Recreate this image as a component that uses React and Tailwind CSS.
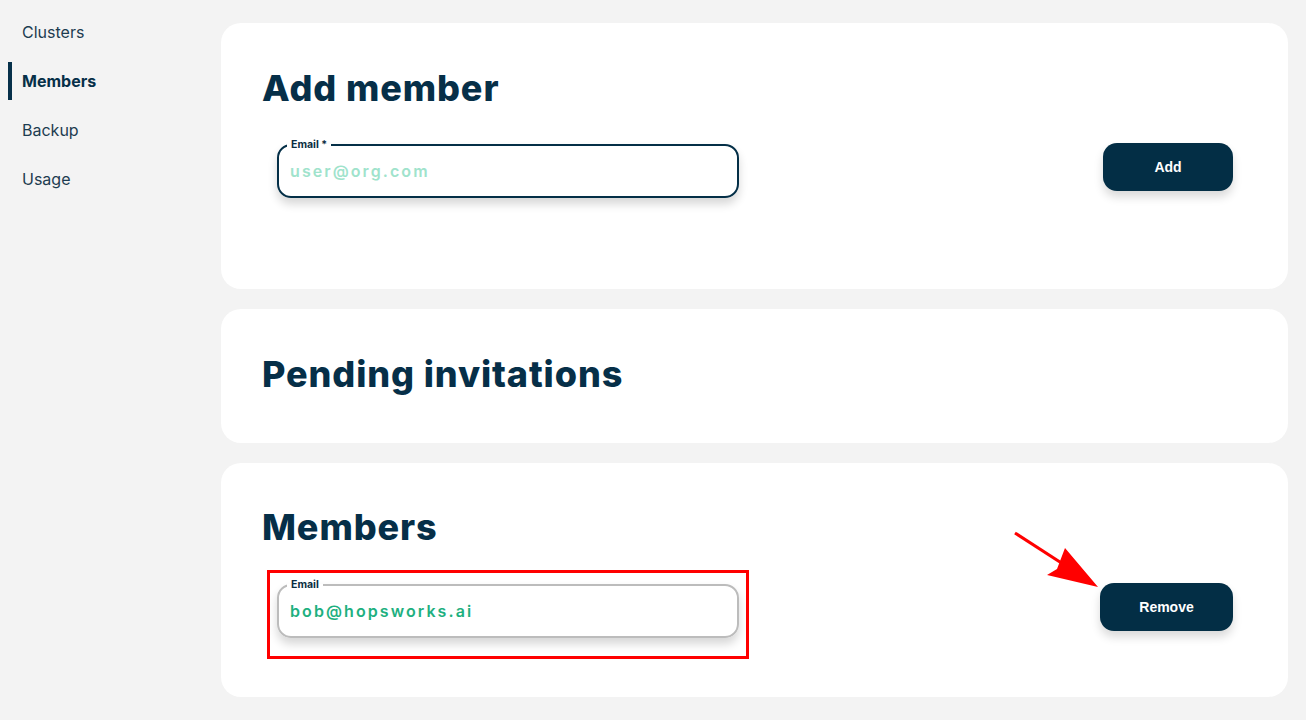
const NAV = ["Clusters", "Members", "Backup", "Usage"];

function EmailField({ label, value, placeholder, active }) {
  return (
    <fieldset
      className={`w-[462px] h-[58px] -mt-[4px] rounded-[14px] border-2 bg-white px-[11px] shadow-[0_6px_10px_rgba(0,0,0,0.16)] ${
        active ? "border-[#042f47]" : "border-[#bcbcbc]"
      }`}
    >
      <legend className="ml-[-3px] px-[4px] text-[10.5px] font-bold leading-none text-[#0a2d42]">
        {label}
      </legend>
      <div
        className={`pt-[8px] text-[16px] font-semibold tracking-[0.13em] ${
          value ? "text-[#1eb07f]" : "text-[#a0e3cc]"
        }`}
      >
        {value || placeholder}
      </div>
    </fieldset>
  );
}

function Button({ children, width, className = "" }) {
  return (
    <button
      className={`${width} ${className} h-[48px] rounded-[14px] bg-[#032e45] text-[14px] font-bold text-white shadow-[0_6px_10px_rgba(0,0,0,0.15)] font-['Liberation_Sans',sans-serif]`}
    >
      {children}
    </button>
  );
}

export default function App() {
  return (
    <div className="flex min-h-[720px] w-full bg-[#f3f3f3] font-['Inter',sans-serif] text-[#062f48]">
      <aside className="w-[221px] shrink-0 pt-[19px]">
        <nav className="flex flex-col gap-[23px]">
          {NAV.map((item) => (
            <div key={item} className="relative flex h-[26px] items-center pl-[22px]">
              {item === "Members" && (
                <span className="absolute left-[8px] top-[-6px] h-[38px] w-[4px] bg-[#06304a]" />
              )}
              <span
                className={`text-[16px] ${
                  item === "Members" ? "font-bold text-[#062f48]" : "text-[#1d3c50]"
                }`}
              >
                {item}
              </span>
            </div>
          ))}
        </nav>
      </aside>

      <main className="flex flex-1 flex-col gap-[20px] pr-[18px] pt-[23px] pb-[23px]">
        <section className="h-[266px] rounded-[20px] bg-white pl-[41px] pr-[55px] pt-[44px]">
          <h1 className="text-[36px] font-extrabold leading-[43px] tracking-[0.025em]">Add member</h1>
          <div className="mt-[34px] flex items-start justify-between pl-[15px]">
            <EmailField label="Email *" placeholder="user@org.com" active />
            <Button width="w-[130px]" className="-mt-[1px]">Add</Button>
          </div>
        </section>

        <section className="h-[134px] rounded-[20px] bg-white pl-[41px] pt-[44px]">
          <h1 className="text-[36px] font-extrabold leading-[43px] tracking-[0.025em]">Pending invitations</h1>
        </section>

        <section className="relative h-[234px] rounded-[20px] bg-white pl-[41px] pr-[55px] pt-[43px]">
          <h1 className="text-[36px] font-extrabold leading-[43px] tracking-[0.025em]">Members</h1>
          <div className="mt-[21px] flex items-start justify-between">
            <div className="ml-[5px] border-[3px] border-[#ff0000] px-[7px] pb-[18px] pt-[11px]">
              <EmailField label="Email" value="bob@hopsworks.ai" />
            </div>
            <Button width="w-[133px]" className="mt-[13px]">Remove</Button>
          </div>
          <svg
            className="absolute left-0 top-0"
            width="900"
            height="140"
            viewBox="0 0 900 140"
          >
            <line x1="794" y1="70" x2="842" y2="101" stroke="#ff0000" strokeWidth="3" />
            <polygon points="877,124 826,112 836,106 844,85" fill="#ff0000" />
          </svg>
        </section>
      </main>
    </div>
  );
}
